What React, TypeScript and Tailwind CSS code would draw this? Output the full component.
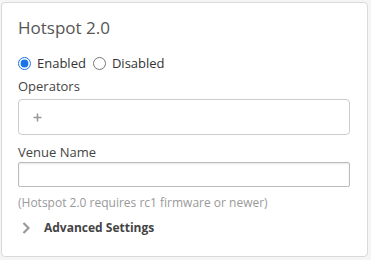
import React, { useState } from "react";

export default function App() {
  const [enabled, setEnabled] = useState(true);

  return (
    <div className="w-[371px] h-[260px] bg-[#f5f5f5] pt-[2px] pl-[1px]" style={{ fontFamily: '"Open Sans", sans-serif' }}>
      <div className="w-[367px] h-[255px] bg-white border border-[#d9d9d9] rounded-[4px] px-[16px] pt-[13px]">
        <h2 className="text-[17px] leading-[24px] text-[#555]">Hotspot 2.0</h2>

        {/* Status radios */}
        <div className="mt-[14px] flex items-center text-[13px] leading-[18px] text-[#333]">
          <label className="flex items-center gap-[6px] mr-[7px]">
            <input
              type="radio"
              checked={enabled}
              onChange={() => setEnabled(true)}
              className="w-[13px] h-[13px] m-0 accent-[#1a73e8]"
            />
            <span>Enabled</span>
          </label>
          <label className="flex items-center gap-[6px]">
            <input
              type="radio"
              checked={!enabled}
              onChange={() => setEnabled(false)}
              className="w-[13px] h-[13px] m-0 accent-[#1a73e8]"
            />
            <span>Disabled</span>
          </label>
        </div>

        <div className="mt-[5px] text-[13px] leading-[18px] text-[#444]">Operators</div>
        <div className="mt-[4px] w-[332px] h-[36px] border border-[#ccc] rounded-[4px] flex items-center pl-[14px]">
          <svg width="9" height="9" viewBox="0 0 9 9">
            <path d="M4.5 0.5v8M0.5 4.5h8" stroke="#999" strokeWidth="1.6" />
          </svg>
        </div>

        <div className="mt-[8px] text-[13px] leading-[18px] text-[#444]">Venue Name</div>
        <input
          type="text"
          className="mt-[1px] block w-[332px] h-[25px] border border-[#bbb] rounded-[2px] shadow-[inset_0_1px_2px_rgba(0,0,0,0.1)] px-[6px] text-[13px] outline-none"
        />

        <div className="mt-[7px] text-[12px] leading-[17px] text-[#999]">(Hotspot 2.0 requires rc1 firmware or newer)</div>

        <div className="mt-[8px] flex items-center">
          <svg width="8" height="12" viewBox="0 0 8 12" className="ml-[4px]">
            <path d="M1.5 1l5 5-5 5" fill="none" stroke="#999" strokeWidth="2.2" />
          </svg>
          <span className="ml-[14px] text-[12px] leading-[17px] font-bold text-[#444]">Advanced Settings</span>
        </div>
      </div>
    </div>
  );
}
